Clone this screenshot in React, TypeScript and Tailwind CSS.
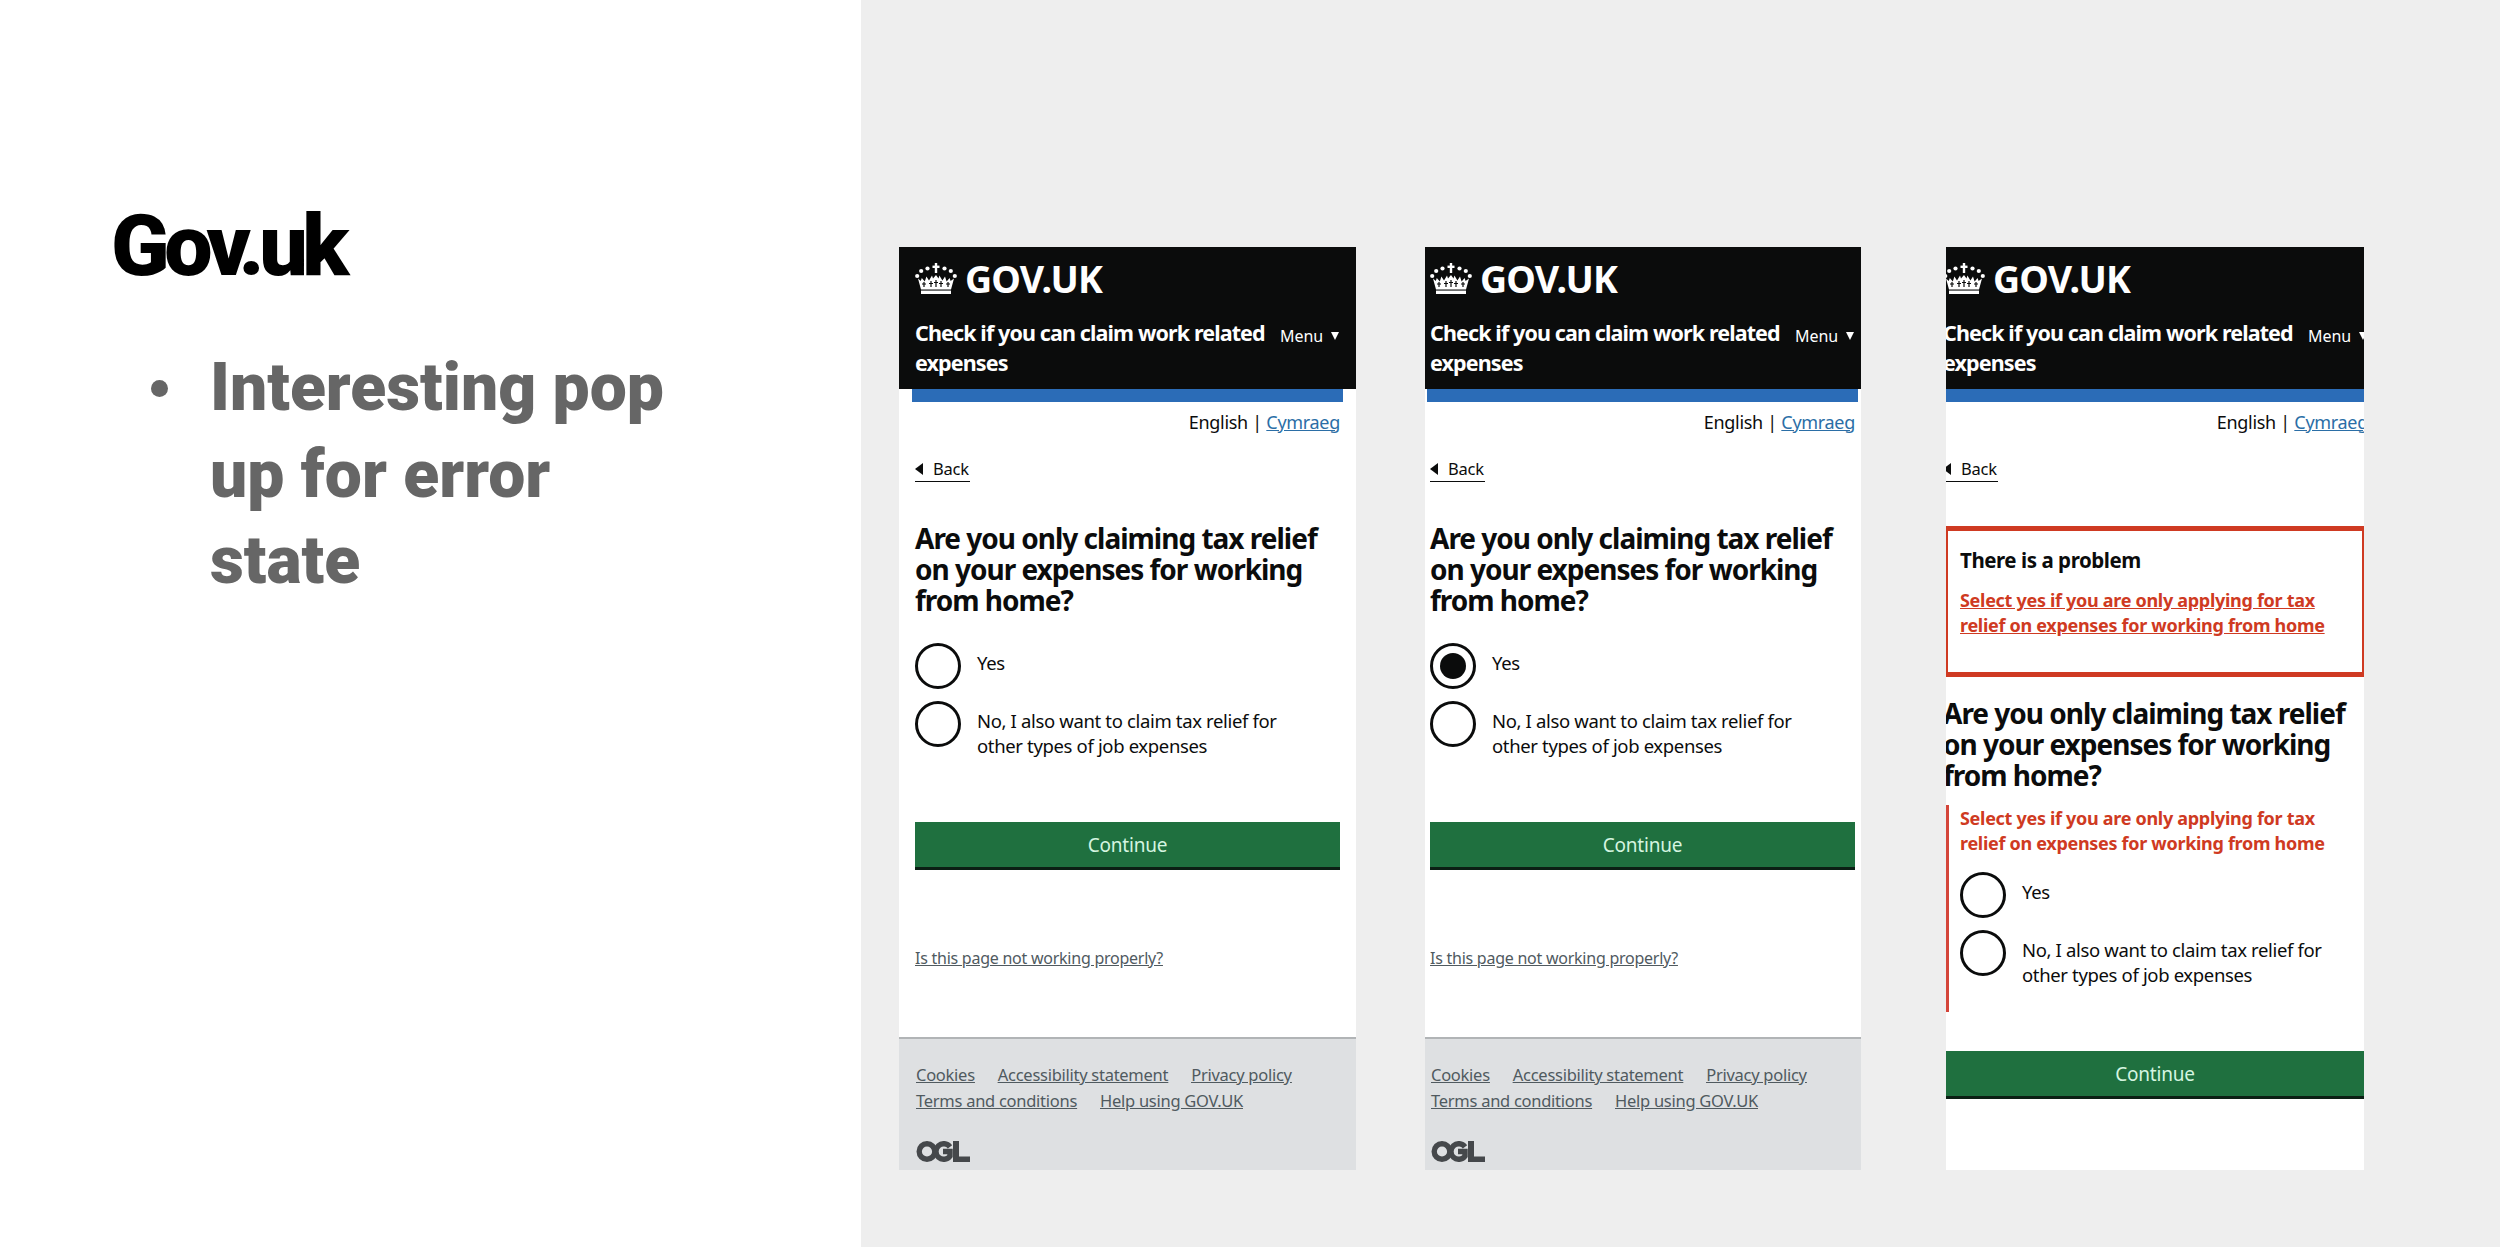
import React from "react";

const body = { fontFamily: '"Noto Sans", "Open Sans", sans-serif' };

function Crown() {
  return (
    <svg viewBox="0 0 42 32" className="w-[42px] h-[32px] shrink-0" fill="#fff">
      <rect x="19.8" y="0" width="2.4" height="10" />
      <rect x="17.5" y="2.6" width="7" height="2.4" />
      <circle cx="12.5" cy="5.5" r="2.1" />
      <circle cx="29.5" cy="5.5" r="2.1" />
      <circle cx="6.2" cy="8" r="2.1" />
      <circle cx="35.8" cy="8" r="2.1" />
      <circle cx="2.2" cy="13" r="2.1" />
      <circle cx="39.8" cy="13" r="2.1" />
      <path d="M6 31h30v-3.4H6z" />
      <path d="M6 26.4h30l3-11-3.4 2.6-1-3-3 3.4-1.6-5-2.6 4-3-5-.9 3.2L21 12l-3 3.4-1-3-3 5-2.6-4-1.6 5-3-3.4-1 3L3 15.4z" />
      <g stroke="#0b0c0c" strokeWidth="1.2">
        <path d="M9 19v5M7 21h4M16 18v6M14 20.5h4M21 17v7M19 19.5h4M26 18v6M24 20.5h4M33 19v5M31 21h4" />
      </g>
    </svg>
  );
}

function Ogl() {
  return (
    <svg viewBox="0 0 54 21" className="w-[54px] h-[21px]">
      <circle cx="11" cy="10.5" r="7.8" fill="none" stroke="#45484b" strokeWidth="5.4" />
      <path d="M34 5.8A7.8 7.8 0 1 0 34 15.2V10.5h-7" fill="none" stroke="#45484b" strokeWidth="5.4" />
      <path d="M37 0h6v15.5h11V21H37z" fill="#45484b" />
    </svg>
  );
}

function Radio({ checked }: { checked?: boolean }) {
  return (
    <span className="w-[46px] h-[46px] rounded-full border-[3px] border-[#0b0c0c] flex items-center justify-center shrink-0">
      {checked && <span className="w-[26px] h-[26px] rounded-full bg-[#0b0c0c]" />}
    </span>
  );
}

function Radios({ checked }: { checked?: boolean }) {
  return (
    <div className="flex flex-col gap-[12px]">
      <div className="flex gap-[16px]">
        <Radio checked={checked} />
        <span className="pt-[8px] text-[18.5px] leading-[24.5px] tracking-[-0.35px] text-[#0b0c0c]">Yes</span>
      </div>
      <div className="flex gap-[16px]">
        <Radio />
        <span className="pt-[8px] w-[320px] text-[18.5px] leading-[24.5px] tracking-[-0.35px] text-[#0b0c0c]">
          No, I also want to claim tax relief for other types of job expenses
        </span>
      </div>
    </div>
  );
}

function Heading() {
  return (
    <h1 className="text-[28px] leading-[31px] font-bold tracking-[-1px] text-[#0b0c0c] w-[420px]">
      Are you only claiming tax relief on your expenses for working from home?
    </h1>
  );
}

function Continue() {
  return (
    <div className="h-[48px] pt-[1px] bg-[#1f703f] border-b-[3px] border-[#0b1f14] flex items-center justify-center text-[#d5f5e0] text-[19px] tracking-[-0.2px]">
      Continue
    </div>
  );
}

function Top({ ml, width }: { ml: string; width: string }) {
  return (
    <>
      <header className="h-[142px] bg-[#0b0c0c] text-white shrink-0">
        <div className={`${ml} w-[425px]`}>
          <div className="flex items-center gap-[8px] pt-[2px] h-[62px]">
            <Crown />
            <span className="text-[37.5px] leading-[46px] font-bold tracking-[-0.8px]">GOV.UK</span>
          </div>
          <div className="flex justify-between mt-[9px]">
            <p className="w-[355px] text-[21.5px] leading-[30px] font-bold tracking-[-0.88px]">
              Check if you can claim work related expenses
            </p>
            <span className="flex items-center gap-[8px] h-[30px] mt-[3px] text-[16px] font-normal tracking-[-0.1px] pr-[1px]">
              Menu
              <span className="w-0 h-0 border-x-[4px] border-x-transparent border-t-[8px] border-t-white" />
            </span>
          </div>
        </div>
      </header>
      <div className={`${width}`}>
        <div className="h-[13px] bg-[#2b6cb7] mx-[-3px]" />
        <div className="h-[42px] pb-[2px] flex items-center justify-end text-[18px] tracking-[-0.3px] text-[#0b0c0c]">
          <span>English | <a className="underline text-[#2b6ea6]">Cymraeg</a></span>
        </div>
        <div className="mt-[13px] w-[55px] h-[25px] border-b-[1.5px] border-[#0b0c0c] flex items-center gap-[10px] text-[16.5px] tracking-[-0.2px] text-[#0b0c0c]">
          <span className="w-0 h-0 border-y-[6px] border-y-transparent border-r-[8px] border-r-[#0b0c0c]" />
          Back
        </div>
      </div>
    </>
  );
}

function Plain({ ml, w, checked, blueFix }: { ml: string; w: string; checked?: boolean; blueFix: string }) {
  return (
    <section className={`${w} h-[923px] bg-white overflow-hidden flex flex-col`} style={body}>
      <Top ml={ml} width={blueFix} />
      <div className={`${ml} w-[425px] flex-1 flex flex-col`}>
        <div className="mt-[41px]"><Heading /></div>
        <div className="mt-[27px]"><Radios checked={checked} /></div>
        <div className="mt-[64px]"><Continue /></div>
        <a className="mt-[78px] text-[16px] leading-[20px] tracking-[-0.25px] underline text-[#505a5f]">Is this page not working properly?</a>
      </div>
      <footer className="h-[133px] bg-[#dee0e2] border-t-[2px] border-[#b1b4b6] shrink-0">
        <div className={`${ml} w-[425px] pl-[1px] pt-[23px]`}>
          <div className="flex flex-wrap gap-x-[23px] w-[420px] text-[16.5px] leading-[26px] tracking-[-0.27px] text-[#505a5f] underline">
            <a>Cookies</a><a>Accessibility statement</a><a>Privacy policy</a><a>Terms and conditions</a><a>Help using GOV.UK</a>
          </div>
          <div className="mt-[27px]"><Ogl /></div>
        </div>
      </footer>
    </section>
  );
}

function ErrorPhone() {
  return (
    <section className="ml-[85px] w-[418px] h-[923px] bg-white overflow-hidden flex flex-col" style={body}>
      <Top ml="ml-[-3px]" width="ml-[-3px] w-[425px]" />
      <div className="mt-[44px] h-[151px] shrink-0 border-x-[2px] border-y-[5px] border-[#cf3a22] pl-[12px] pt-[15px]">
        <h2 className="text-[20.5px] leading-[28px] font-bold tracking-[-0.45px] text-[#0b0c0c]">There is a problem</h2>
        <a className="block mt-[14px] w-[390px] text-[18px] leading-[24.5px] font-bold tracking-[-0.3px] underline text-[#cf3a22]">
          Select yes if you are only applying for tax relief on expenses for working from home
        </a>
      </div>
      <div className="ml-[-3px] mt-[21px]"><Heading /></div>
      <div className="mt-[14px] h-[207px] shrink-0 border-l-[3px] border-[#d4453a] pl-[11px] pt-[1px]">
        <p className="w-[390px] text-[18px] leading-[24.5px] font-bold tracking-[-0.3px] text-[#cf3a22]">
          Select yes if you are only applying for tax relief on expenses for working from home
        </p>
        <div className="mt-[17px]"><Radios /></div>
      </div>
      <div className="mt-[39px]"><Continue /></div>
    </section>
  );
}

export default function App() {
  return (
    <div className="flex w-[2500px] h-[1247px] overflow-hidden bg-[#eeeeee]">
      <aside className="w-[861px] h-full bg-white pl-[111px] pt-[196px] shrink-0" style={{ fontFamily: 'Roboto, sans-serif' }}>
        <h1 className="text-[86px] leading-[100px] font-black tracking-[-5.4px] text-black">Gov.uk</h1>
        <div className="flex mt-[49px] ml-[40px] gap-[42px]">
          <span className="mt-[35px] w-[17px] h-[17px] rounded-full bg-[#666666] shrink-0" />
          <p className="w-[490px] text-[66px] leading-[86.5px] font-black text-[#666666]">
            Interesting pop up for error state
          </p>
        </div>
      </aside>
      <main className="flex items-start pt-[247px] pl-[38px]">
        <Plain w="w-[457px]" ml="ml-[16px]" blueFix="ml-[16px] w-[425px]" />
        <div className="ml-[69px]">
          <Plain w="w-[436px]" ml="ml-[5px]" checked blueFix="ml-[5px] w-[425px]" />
        </div>
        <ErrorPhone />
      </main>
    </div>
  );
}
